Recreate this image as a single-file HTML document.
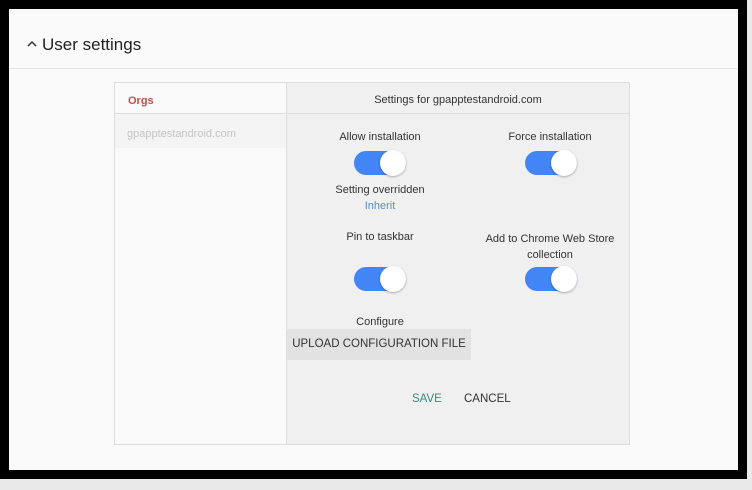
<!DOCTYPE html>
<html><head><style>
*{margin:0;padding:0;box-sizing:border-box}
body{width:752px;height:490px;background:#e9e9e9;font-family:"Liberation Sans",sans-serif;position:relative;overflow:hidden}
.frame{position:absolute;left:0;top:0;width:747px;height:479px;background:#000}
.inner{position:absolute;left:9px;top:9px;width:729px;height:461px;background:#fafafa}
.a{position:absolute}
.t{position:absolute;font-size:11px;color:#333;text-align:center}
.tog{position:absolute;width:52px;height:24px;border-radius:12px;background:#4285f4}
.tog::after{content:"";position:absolute;right:0;top:-1px;width:26px;height:26px;border-radius:50%;background:#fff;box-shadow:0 1px 2px rgba(0,0,0,.3)}
</style></head><body>
<div class="frame"></div>
<div class="inner"></div>
<div class="a" style="left:27px;top:35px;font-size:17px;color:#222">
<svg width="10" height="8" style="vertical-align:2px;margin-right:5px" viewBox="0 0 10 8"><path d="M1 6 L5 2 L9 6" stroke="#333" stroke-width="1.5" fill="none"/></svg>User settings</div>
<div class="a" style="left:9px;top:68px;width:729px;height:1px;background:#e6e6e6"></div>
<div class="a" style="left:114px;top:82px;width:516px;height:363px;border:1px solid #ddd;background:#fafafa"></div>
<div class="a" style="left:286px;top:82px;width:344px;height:363px;border:1px solid #ddd;background:#f0f0f0"></div>
<div class="a" style="left:115px;top:113px;width:515px;height:1px;background:#ddd"></div>
<div class="a" style="left:115px;top:114px;width:171px;height:34px;background:#f4f4f4"></div>
<div class="a" style="left:128px;top:95px;font-size:11px;font-weight:bold;color:#c0504d">Orgs</div>
<div class="a" style="left:127px;top:128px;font-size:11px;color:#c4c4c4">gpapptestandroid.com</div>
<div class="t" style="left:287px;width:342px;top:94px">Settings for gpapptestandroid.com</div>
<div class="t" style="left:300px;width:160px;top:131px">Allow installation</div>
<div class="t" style="left:470px;width:160px;top:131px">Force installation</div>
<div class="tog" style="left:354px;top:151px"></div>
<div class="tog" style="left:525px;top:151px"></div>
<div class="t" style="left:300px;width:160px;top:184px">Setting overridden</div>
<div class="t" style="left:300px;width:160px;top:200px;color:#5b8bd0">Inherit</div>
<div class="t" style="left:300px;width:160px;top:231px">Pin to taskbar</div>
<div class="t" style="left:470px;width:160px;top:231px;line-height:16px">Add to Chrome Web Store collection</div>
<div class="tog" style="left:354px;top:267px"></div>
<div class="tog" style="left:525px;top:267px"></div>
<div class="t" style="left:300px;width:160px;top:316px">Configure</div>
<div class="a" style="left:287px;top:329px;width:184px;height:31px;background:#e2e2e2;font-size:11.5px;color:#333;line-height:31px;text-align:center">UPLOAD CONFIGURATION FILE</div>
<div class="a" style="left:412px;top:393px;font-size:11.5px;color:#3e8a7c">SAVE</div>
<div class="a" style="left:464px;top:393px;font-size:11.5px;color:#333">CANCEL</div>
</body></html>
